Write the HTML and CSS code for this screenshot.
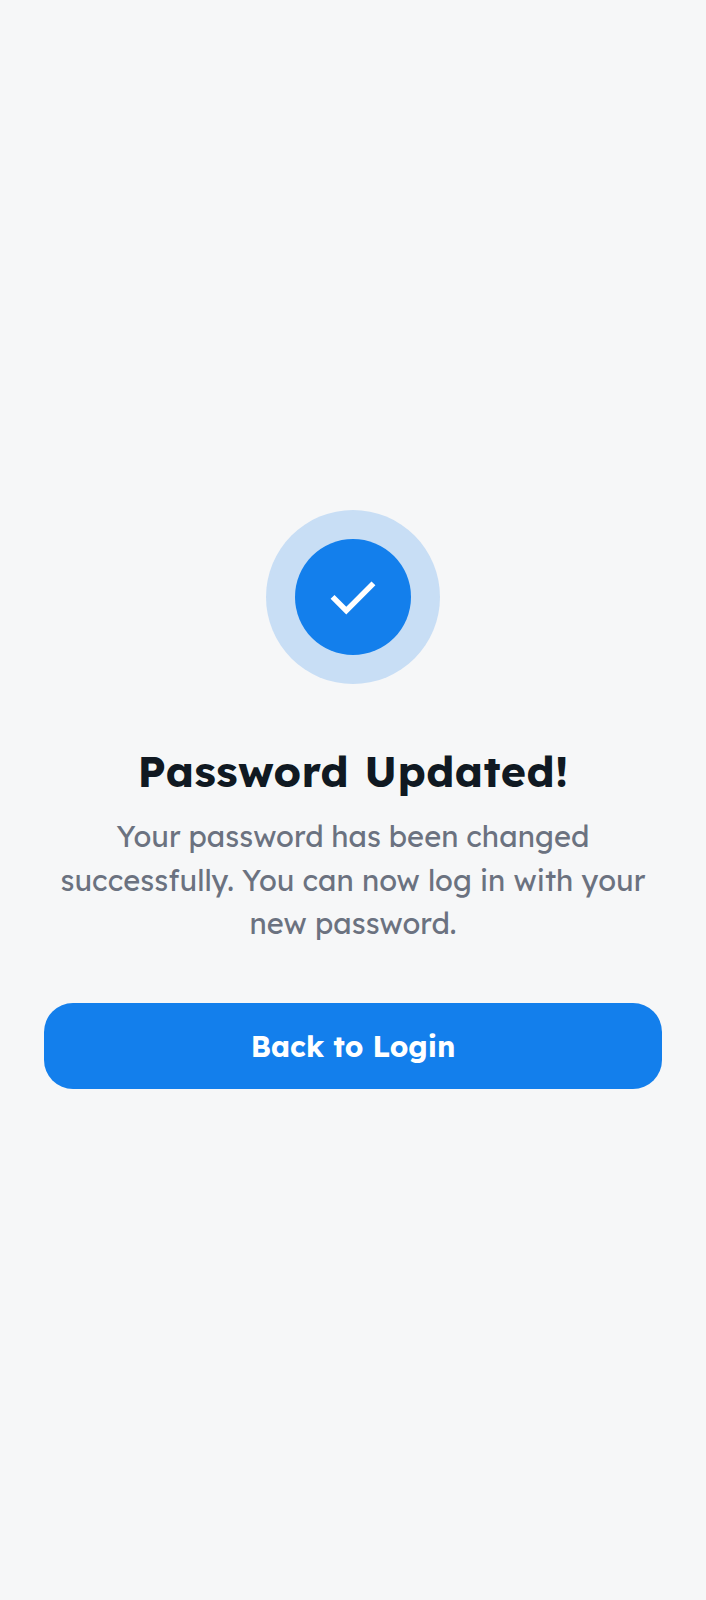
FILE: index.html
```html
<!DOCTYPE html>
<html lang="en">
<head>
<meta charset="utf-8">
<title>Password Updated</title>
<link rel="stylesheet" href="styles.css">
</head>
<body>
<main class="screen">
  <div class="badge">
    <div class="badge-core">
      <svg class="check" viewBox="0 -960 960 960" aria-hidden="true"><path d="M382-240 154-468l57-57 171 171 367-367 57 57-424 424Z"/></svg>
    </div>
  </div>
  <h1 class="title">Password Updated!</h1>
  <p class="message">
    <span class="line line-open">Your password has been changed</span>
    <span class="line">successfully. You can now log in with your</span>
    <span class="line">new password.</span>
  </p>
  <button class="button" type="button">Back to Login</button>
</main>
</body>
</html>
```
FILE: styles.css
```css
* { box-sizing: border-box; }
body {
  margin: 0;
  background: #f6f7f8;
  font-family: Lexend, Inter, "Open Sans", sans-serif;
}
.screen {
  display: flex;
  flex-direction: column;
  align-items: center;
  height: 1600px;
  padding: 510px 44px 0;
}
.badge {
  display: grid;
  place-items: center;
  width: 174px;
  height: 174px;
  border-radius: 50%;
  background: #c8def5;
}
.badge-core {
  display: grid;
  place-items: center;
  width: 116px;
  height: 116px;
  border-radius: 50%;
  background: #137fec;
}
.check { width: 66px; height: 66px; margin-top: 1px; fill: #fff; }
.title {
  margin: 60px 0 0;
  color: #101922;
  font-size: 43px;
  font-weight: 700;
  line-height: 54px;
  letter-spacing: 0.4px;
  word-spacing: 1px;
  white-space: nowrap;
}
.message {
  margin: 17.2px 0 0;
  color: #6b7280;
  font-size: 29px;
  line-height: 43.5px;
  letter-spacing: 0.05px;
  text-align: center;
}
.line { display: block; white-space: nowrap; }
.line-open { letter-spacing: 0.1px; word-spacing: -0.6px; }
.button {
  width: 100%;
  height: 86px;
  margin-top: 57.3px;
  padding: 0;
  border: 0;
  border-radius: 29px;
  background: #137fec;
  color: #fff;
  font: inherit;
  font-size: 29px;
  font-weight: 700;
}
```
